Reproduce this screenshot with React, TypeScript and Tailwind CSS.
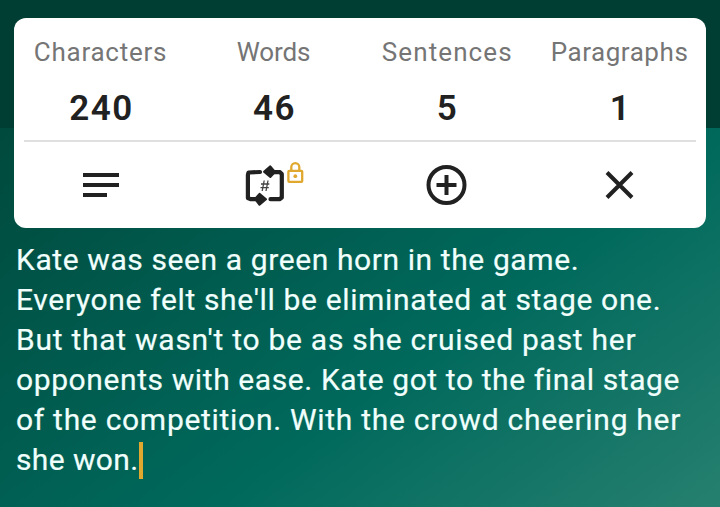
const stats = [
  { label: "Characters", value: "240", labelClass: "tracking-[0.75px]" },
  { label: "Words", value: "46", labelClass: "-tracking-[0.1px]" },
  { label: "Sentences", value: "5", labelClass: "pl-[1.5px] tracking-[1.1px]" },
  { label: "Paragraphs", value: "1", labelClass: "tracking-[0.55px]" },
]

const lines = [
  { text: "Kate was seen a green horn in the game.", className: "tracking-[0.6px]" },
  { text: "Everyone felt she'll be eliminated at stage one.", className: "tracking-[0.65px]" },
  { text: "But that wasn't to be as she cruised past her", className: "tracking-[0.74px]" },
  { text: "opponents with ease. Kate got to the final stage", className: "tracking-[0.6px]" },
  { text: "of the competition. With the crowd cheering her", className: "tracking-[0.71px]" },
  { text: "she won.", className: "tracking-[0.38px]" },
]

function NotesIcon() {
  return (
    <svg width="36" height="24" viewBox="0 0 36 24" fill="#212121">
      <path d="M0 0h36v4H0zM0 10h36v4H0zM0 20h24v4H0z" />
    </svg>
  )
}

function ReplaceIcon() {
  return (
    <svg width="61" height="48" viewBox="0 0 61 48" fill="none">
      <g stroke="#212121" strokeWidth="4.2" strokeLinecap="round" strokeLinejoin="round">
        <path d="M17 11L5.500 11.500L4.900 14V37L7.500 38.200H14" />
        <path d="M27.500 38.200H36.500L38.800 36.500V13L37 11.200H30" />
      </g>
      <g fill="#212121" stroke="#212121" strokeWidth="2" strokeLinejoin="round">
        <path d="M21 10.800L27.300 5.300L32 11L27.300 16Z" />
        <path d="M12 38L16.500 32.800L23 38.300L16.500 43.800Z" />
      </g>
      <path d="M21.200 19.500l-2 10.500M25 19.500l-2 10.500M18 23h8.300M17.500 26.700h8.300" stroke="#444" strokeWidth="1.3" />
      <g stroke="#e0a82e" strokeWidth="2.3">
        <path d="M48.300 10V6.200a4 4 0 0 1 8 0V10" />
        <rect x="45.400" y="9.800" width="13.800" height="11" rx="0.8" />
        <circle cx="52.300" cy="15.200" r="1.9" fill="#e0a82e" stroke="none" />
      </g>
    </svg>
  )
}

function AddIcon() {
  return (
    <svg width="41" height="40" viewBox="0 0 41 40" fill="none" stroke="#212121" strokeWidth="4">
      <circle cx="20.500" cy="20" r="18" />
      <path d="M20.500 10v20M10.500 20h20" />
    </svg>
  )
}

function CloseIcon() {
  return (
    <svg width="29" height="28" viewBox="0 0 29 28" stroke="#212121" strokeWidth="4">
      <path d="M2 1.500l25 25M27 1.500l-25 25" />
    </svg>
  )
}

export default function App() {
  return (
    <main className="h-[507px] w-[720px] overflow-hidden bg-linear-[144deg,#004a3d_13%,#00695c_64%,#26806f_100%] font-['Roboto',sans-serif]">
      <div className="h-32 bg-[#003d33] px-3.5 pt-[18px]">
        <section className="h-[210px] rounded-xl bg-white px-2.5">
          <div className="-mx-2.5 grid h-[122px] grid-cols-4 text-center">
            {stats.map((stat) => (
              <div key={stat.label} className="pt-4">
                <p className="text-[26px] leading-9 font-normal text-[#757575]">
                  <span className={stat.labelClass}>{stat.label}</span>
                </p>
                <p className="mt-[21px] pl-0.5 text-[35px] leading-9 font-semibold tracking-[1.5px] text-[#212121]">{stat.value}</p>
              </div>
            ))}
          </div>
          <div className="h-0.5 bg-[#e0e0e0]" />
          <div className="-mx-2.5 grid h-[86px] grid-cols-4 place-items-center">
            <NotesIcon />
            <ReplaceIcon />
            <AddIcon />
            <CloseIcon />
          </div>
        </section>
      </div>
      <div className="pt-28 pl-4 text-[30px] leading-10 whitespace-nowrap text-[#f0fffc] [-webkit-text-stroke:0.2px_#f0fffc]">
        {lines.map((line, i) => (
          <p key={line.text} className="flex items-center">
            <span className={line.className}>{line.text}</span>
            {i === lines.length - 1 && <span className="h-[37px] w-1 bg-[#e0a82e]" />}
          </p>
        ))}
      </div>
    </main>
  )
}
